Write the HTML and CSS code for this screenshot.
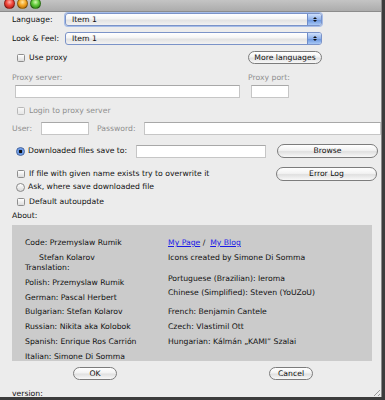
FILE: index.html
```html
<!DOCTYPE html>
<html>
<head>
<meta charset="utf-8">
<link rel="stylesheet" href="styles.css">
</head>
<body>
<div class="window">
  <div class="titlebar">
    <span class="light red"></span><span class="light yellow"></span><span class="light green"></span>
  </div>
  <div class="content">
    <div class="row r-lang">
      <span class="lbl w-lbl">Language:</span>
      <div class="combo focus"><span class="combo-text">Item 1</span><span class="combo-arrow"><i class="up"></i><i class="down"></i></span></div>
    </div>
    <div class="row r-look">
      <span class="lbl w-lbl">Look &amp; Feel:</span>
      <div class="combo"><span class="combo-text">Item 1</span><span class="combo-arrow"><i class="up"></i><i class="down"></i></span></div>
    </div>
    <div class="row r-proxy">
      <span class="check"></span><span class="lbl">Use proxy</span>
      <span class="btn btn-more">More languages</span>
    </div>
    <div class="row r-plabels">
      <span class="lbl dis c-server">Proxy server:</span>
      <span class="lbl dis">Proxy port:</span>
    </div>
    <div class="row r-pfields">
      <span class="field f-server"></span>
      <span class="field f-port"></span>
    </div>
    <div class="row r-login">
      <span class="check dis-box"></span><span class="lbl dis">Login to proxy server</span>
    </div>
    <div class="row r-user">
      <span class="lbl dis c-user">User:</span>
      <span class="field f-user"></span>
      <span class="lbl dis c-pass">Password:</span>
      <span class="field f-pass"></span>
    </div>
    <div class="row r-save">
      <span class="radio on"></span><span class="lbl c-save">Downloaded files save to:</span>
      <span class="field f-save"></span>
      <span class="btn btn-wide">Browse</span>
    </div>
    <div class="row r-over">
      <span class="check"></span><span class="lbl c-over">If file with given name exists try to overwrite it</span>
      <span class="btn btn-wide">Error Log</span>
    </div>
    <div class="row r-ask">
      <span class="radio"></span><span class="lbl">Ask, where save downloaded file</span>
    </div>
    <div class="row r-auto">
      <span class="check"></span><span class="lbl">Default autoupdate</span>
    </div>
    <div class="row r-about">
      <span class="lbl">About:</span>
    </div>
    <div class="panel">
      <div class="col col-left">
        <div class="ln">Code: Przemyslaw Rumik</div>
        <div class="ln"><span class="indent">Stefan Kolarov</span><br>Translation:</div>
        <div class="ln">Polish: Przemyslaw Rumik</div>
        <div class="ln">German: Pascal Herbert</div>
        <div class="ln m4">Bulgarian: Stefan Kolarov</div>
        <div class="ln">Russian: Nikita aka Kolobok</div>
        <div class="ln">Spanish: Enrique Ros Carrión</div>
        <div class="ln">Italian: Simone Di Somma</div>
      </div>
      <div class="col col-right">
        <div class="ln"><a class="link">My Page</a> / &nbsp;<a class="link">My Blog</a></div>
        <div class="ln">Icons created by Simone Di Somma</div>
        <div class="ln m11">Portuguese (Brazilian): Ieroma</div>
        <div class="ln m4">Chinese (Simplified): Steven (YoUZoU)</div>
        <div class="ln m9">French: Benjamin Cantele</div>
        <div class="ln">Czech: Vlastimil Ott</div>
        <div class="ln">Hungarian: Kálmán „KAMI” Szalai</div>
      </div>
    </div>
    <div class="row r-buttons">
      <span class="btn btn-ok">OK</span>
      <span class="btn btn-cancel">Cancel</span>
    </div>
    <div class="row r-version">
      <span class="lbl">version:</span>
    </div>
    <span class="grip"></span>
  </div>
</div>
</body>
</html>
```
FILE: styles.css
```css
html, body {
  margin: 0;
  padding: 0;
}
body {
  background: #3c3c3c;
  width: 385px;
  height: 400px;
  overflow: hidden;
  font-family: "DejaVu Sans", sans-serif;
  font-size: 7.7px;
  color: #111;
}
.window {
  width: 382px;
  height: 397px;
  background: #ececec;
  overflow: hidden;
  position: relative;
  border-right: 1px solid #8a8a8a;
  box-sizing: border-box;
}
.titlebar {
  height: 12px;
  background: linear-gradient(#c4c4c4, #acacac);
  border-bottom: 1px solid #8c8c8c;
  box-sizing: border-box;
  display: flex;
  gap: 2px;
  padding-left: 4px;
  align-items: flex-start;
}
.light {
  width: 11px;
  height: 11px;
  border-radius: 50%;
  margin-top: -2px;
  box-sizing: border-box;
  border: 1px solid rgba(0,0,0,0.35);
}
.red { background: radial-gradient(circle at 50% 35%, #ffb0a8 0, #f0453a 45%, #a01008 100%); }
.yellow { background: radial-gradient(circle at 50% 35%, #ffe6a0 0, #f5a623 45%, #a05c00 100%); }
.green { background: radial-gradient(circle at 50% 35%, #d4f7b0 0, #5fc93a 45%, #216d0a 100%); }

.content {
  padding-left: 12px;
}
.row {
  display: flex;
  align-items: center;
  line-height: 10px;
}
.lbl { white-space: nowrap; }
.dis { color: #8f8f8f; }

.r-lang { margin-top: 1px; height: 13px; }
.r-look { margin-top: 6px; height: 13px; }
.w-lbl { width: 53px; }
.combo {
  width: 257px;
  height: 13px;
  box-sizing: border-box;
  border: 1px solid #7b93c8;
  border-radius: 3px;
  background: linear-gradient(#ffffff, #f4f4f4 45%, #e2e2e2 55%, #f2f2f2);
  display: flex;
  align-items: center;
  overflow: hidden;
}
.combo.focus { box-shadow: 0 0 0 1px #a6bde8; }
.combo-text { flex: 1; padding-left: 6px; }
.combo-arrow {
  width: 13px;
  height: 100%;
  background: linear-gradient(#cfe0fb, #8fb1ea 50%, #6b96de 55%, #a8c8f6);
  border-left: 1px solid #6f8cc8;
  display: flex;
  flex-direction: column;
  align-items: center;
  justify-content: center;
  gap: 1px;
}
.combo-arrow i {
  display: block;
  width: 0;
  height: 0;
  border-left: 2px solid transparent;
  border-right: 2px solid transparent;
}
.combo-arrow .up { border-bottom: 2px solid #111; }
.combo-arrow .down { border-top: 2px solid #111; }

.check {
  width: 8px;
  height: 8px;
  box-sizing: border-box;
  border: 1px solid #8e8e8e;
  border-radius: 1.5px;
  background: linear-gradient(#ffffff, #dcdcdc);
  margin-left: 5px;
  margin-right: 4px;
  flex: none;
}
.check.dis-box { border-color: #b8b8b8; background: linear-gradient(#f8f8f8, #e6e6e6); }
.radio {
  width: 9px;
  height: 9px;
  box-sizing: border-box;
  border: 1px solid #8a8a8a;
  border-radius: 50%;
  background: linear-gradient(#ffffff, #d8d8d8);
  margin-left: 4px;
  margin-right: 3px;
  flex: none;
}
.radio.on {
  border-color: #3e5f9c;
  background: radial-gradient(circle, #111 0, #111 1.4px, #5d8fe0 2px, #a9c6f5 100%);
}

.btn {
  box-sizing: border-box;
  height: 14px;
  border: 1px solid #7c7c7c;
  border-radius: 7px;
  background: linear-gradient(#ffffff, #f2f2f2 45%, #e0e0e0 55%, #f8f8f8);
  display: flex;
  align-items: center;
  justify-content: center;
  white-space: nowrap;
  flex: none;
}
.r-proxy { margin-top: 6px; height: 13px; width: 310px; }
.btn-more { margin-left: auto; width: 74px; height: 13px; }

.r-plabels { margin-top: 9px; height: 10px; }
.c-server { width: 236px; }
.r-pfields { margin-top: 2px; height: 13px; }
.field {
  height: 13px;
  box-sizing: border-box;
  background: #fff;
  border: 1px solid #c6c6c6;
  border-top-color: #a8a8a8;
  flex: none;
}
.f-server { width: 225px; margin-left: 3px; }
.f-port { width: 38px; margin-left: 11px; }

.r-login { margin-top: 8px; height: 10px; }
.r-user { margin-top: 6px; height: 13px; }
.c-user { width: 29px; }
.f-user { width: 48px; }
.c-pass { margin-left: 8px; width: 47px; }
.f-pass { width: 237px; }

.r-save { margin-top: 9px; height: 14px; }
.c-save { width: 108px; }
.f-save { width: 130px; }
.btn-wide { width: 101px; margin-left: 11px; }
.r-over { margin-top: 9px; height: 14px; }
.c-over { width: 236px; }

.r-ask { margin-top: 1px; height: 10px; }
.r-auto { margin-top: 5px; height: 10px; }
.r-about { margin-top: 4px; height: 10px; }

.panel {
  margin-top: 4px;
  width: 360px;
  height: 136px;
  background: #cbcbcb;
  display: flex;
  padding: 13px 0 0 13px;
  box-sizing: border-box;
}
.col { display: flex; flex-direction: column; }
.col-left { width: 143px; }
.ln { line-height: 10px; margin-top: 5px; white-space: nowrap; }
.ln:first-child { margin-top: 0; }
.ln.m4 { margin-top: 4px; }
.ln.m9 { margin-top: 9px; }
.ln.m11 { margin-top: 11px; }
.indent { padding-left: 14px; }
.link { color: #1919e6; text-decoration: underline; }

.r-buttons { margin-top: 6px; height: 13px; }
.btn-ok { width: 44px; height: 13px; margin-left: 61px; }
.btn-cancel { width: 44px; height: 13px; margin-left: 152px; }
.r-version { margin-top: 9px; height: 10px; }

.grip {
  position: absolute;
  right: 1px;
  bottom: 1px;
  width: 9px;
  height: 9px;
  background: repeating-linear-gradient(135deg, transparent 0 2px, #9a9a9a 2px 3px);
  clip-path: polygon(100% 0, 100% 100%, 0 100%);
}
```
